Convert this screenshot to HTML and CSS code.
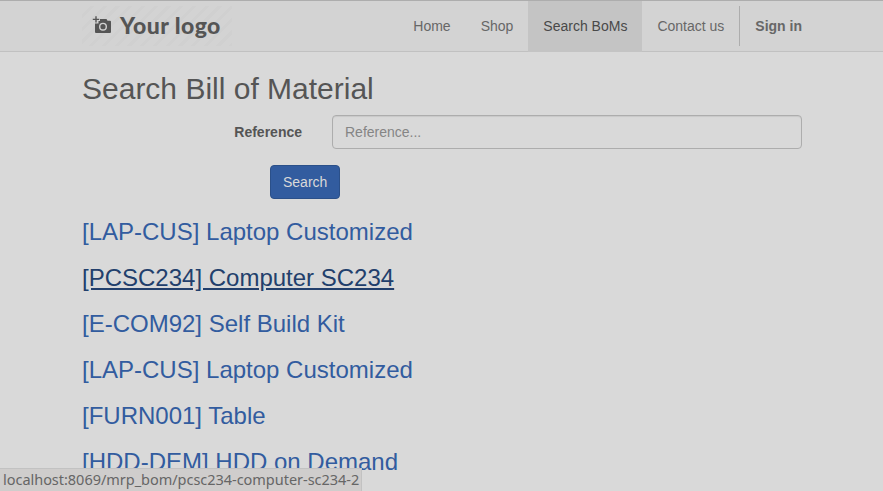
FILE: index.html
```html
<!DOCTYPE html>
<html lang="en">
<head>
<meta charset="utf-8">
<title>Search Bill of Material</title>
<link rel="stylesheet" href="styles.css">
</head>
<body>
<header class="navbar">
  <div class="container navbar-inner">
    <a class="brand" href="#">
      <svg class="brand-icon" viewBox="0 0 20 20" width="20" height="20" aria-hidden="true">
        <path fill="#555" fill-rule="evenodd" d="M8 4h6.500l1 1.700H18q1 0 1 1V17q0 1-1 1H4q-1 0-1-1V8.500h3.500V6H8zM11 7.700a4 4 0 1 0 0 8a4 4 0 1 0 0-8zm0 1.400a2.600 2.600 0 1 1 0 5.200a2.600 2.600 0 1 1 0-5.200z"/>
        <path stroke="#555" stroke-width="1.400" d="M4 1.200v6.400M.8 4.400h6.400"/>
      </svg>
      <span class="brand-name">Your logo</span>
    </a>
    <nav class="nav">
      <a href="#">Home</a>
      <a href="#">Shop</a>
      <a class="active" href="#">Search BoMs</a>
      <a href="#">Contact us</a>
      <span class="divider"></span>
      <a class="signin" href="#">Sign in</a>
    </nav>
  </div>
</header>
<main class="container">
  <h1>Search Bill of Material</h1>
  <form>
    <div class="field">
      <label for="reference">Reference</label>
      <input id="reference" type="text" placeholder="Reference...">
    </div>
    <button type="button">Search</button>
  </form>
  <div class="results">
    <h3><a href="#">[LAP-CUS] Laptop Customized</a></h3>
    <h3><a class="hovered" href="#">[PCSC234] Computer SC234</a></h3>
    <h3><a href="#">[E-COM92] Self Build Kit</a></h3>
    <h3><a href="#">[LAP-CUS] Laptop Customized</a></h3>
    <h3><a href="#">[FURN001] Table</a></h3>
    <h3><a href="#">[HDD-DEM] HDD on Demand</a></h3>
  </div>
</main>
<div class="status">localhost:8069/mrp_bom/pcsc234-computer-sc234-2</div>
</body>
</html>
```
FILE: styles.css
```css
* { box-sizing: border-box; }
html, body { height: 100%; }
body {
  margin: 0;
  overflow: hidden;
  background: #d9d9d9;
  color: #555;
  font: 14px/20px "Liberation Sans", Arial, sans-serif;
}
a { color: #325c9f; text-decoration: none; }
.container { width: 750px; margin: 0 0 0 67px; padding: 0 15px; }
.navbar {
  height: 52px;
  background: #d3d3d3;
  border-top: 1px solid #adadad;
  border-bottom: 1px solid #c1c1c1;
}
.navbar-inner { display: flex; justify-content: space-between; padding-right: 0; }
.brand {
  display: flex;
  align-items: center;
  width: 150px;
  height: 40px;
  margin-top: 5px;
  padding-left: 10px;
  color: #555;
  background: repeating-linear-gradient(135deg, #d3d3d3 0 6px, #d0d0d0 6px 9px);
}
.brand-icon { flex: none; margin-top: -2px; }
.brand-name {
  margin: -2px 0 0 8px;
  font: 900 23px/40px Lato, sans-serif;
  letter-spacing: .45px;
  white-space: nowrap;
}
.nav { display: flex; }
.nav a { height: 51px; padding: 15px; color: #676767; white-space: nowrap; }
.nav .active { color: #494949; background: #c4c4c4; }
.nav .signin { font-weight: bold; }
.divider { width: 1px; height: 40px; margin-top: 5px; background: #adadad; }
h1 { margin: 20px 0 10px; font-size: 30px; line-height: 33px; font-weight: normal; }
.field { display: flex; justify-content: flex-end; margin-bottom: 16px; }
label { padding-top: 7px; margin-right: 30px; font-weight: bold; }
input {
  width: 470px;
  height: 34px;
  padding: 6px 12px;
  border: 1px solid #adadad;
  border-radius: 4px;
  background: #d9d9d9;
  box-shadow: inset 0 1px 1px rgba(0, 0, 0, .075);
  font: inherit;
}
input::placeholder { color: #858585; opacity: 1; }
button {
  display: block;
  height: 34px;
  margin-left: 188px;
  padding: 6px 12px;
  border: 1px solid #2b5089;
  border-radius: 4px;
  background: #325c9f;
  color: #d9d9d9;
  font: inherit;
}
h3 { margin: 20px 0; font-size: 24px; line-height: 26px; font-weight: normal; }
.hovered { color: #223f6c; text-decoration: underline; }
.status {
  position: fixed;
  left: 0;
  bottom: 0;
  width: 362px;
  height: 23px;
  padding-left: 3px;
  border-top: 1px solid #c2c2c2;
  border-right: 1px solid #c2c2c2;
  background: #cfcdcc;
  color: #666;
  font: 14.5px/20px "Noto Sans", sans-serif;
  letter-spacing: -.03px;
  white-space: nowrap;
}
```
